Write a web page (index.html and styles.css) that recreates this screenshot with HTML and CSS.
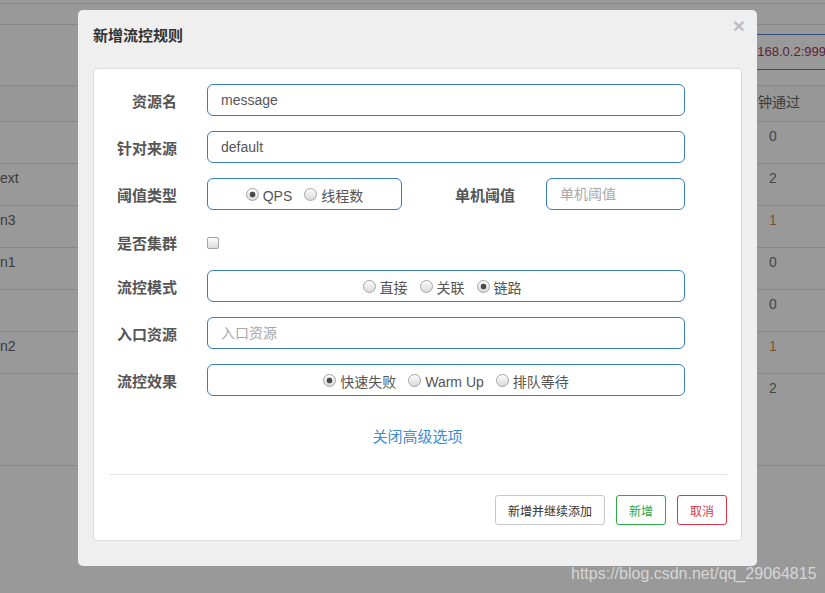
FILE: index.html
```html
<!DOCTYPE html>
<html lang="zh-CN">
<head>
<meta charset="utf-8">
<title>新增流控规则</title>
<link rel="stylesheet" href="styles.css">
</head>
<body>
<div class="page">
  <div class="bar bar-a"></div>
  <div class="bar bar-b"></div>
  <div class="search">
    <div class="host-box">192.168.0.2:9999</div>
  </div>
  <div class="trow thead"><span class="c1"></span><span class="c2">秒钟通过</span></div>
  <div class="trow"><span class="c1"></span><span class="c2 v">0</span></div>
  <div class="trow"><span class="c1">ext</span><span class="c2 v">2</span></div>
  <div class="trow"><span class="c1">n3</span><span class="c2 v warn">1</span></div>
  <div class="trow"><span class="c1">n1</span><span class="c2 v">0</span></div>
  <div class="trow"><span class="c1"></span><span class="c2 v">0</span></div>
  <div class="trow"><span class="c1">n2</span><span class="c2 v warn">1</span></div>
  <div class="trow tlast"><span class="c1"></span><span class="c2 v">2</span></div>
</div>

<div class="modal">
  <div class="modal-header">
    <h4 class="modal-title">新增流控规则</h4>
    <span class="close">×</span>
  </div>
  <div class="panel">
    <div class="form">
      <div class="row">
        <label class="lbl">资源名</label>
        <input class="ctl wide" type="text" value="message">
      </div>
      <div class="row">
        <label class="lbl">针对来源</label>
        <input class="ctl wide" type="text" value="default">
      </div>
      <div class="row">
        <label class="lbl">阈值类型</label>
        <div class="ctl radios short">
          <label class="opt"><input type="radio" name="grade" checked><span>QPS</span></label>
          <label class="opt"><input type="radio" name="grade"><span>线程数</span></label>
        </div>
        <label class="lbl lbl2">单机阈值</label>
        <input class="ctl narrow" type="text" placeholder="单机阈值">
      </div>
      <div class="row row-check">
        <label class="lbl">是否集群</label>
        <input class="chk" type="checkbox">
      </div>
      <div class="row">
        <label class="lbl">流控模式</label>
        <div class="ctl radios wide shift">
          <label class="opt"><input type="radio" name="mode"><span>直接</span></label>
          <label class="opt"><input type="radio" name="mode"><span>关联</span></label>
          <label class="opt"><input type="radio" name="mode" checked><span>链路</span></label>
        </div>
      </div>
      <div class="row">
        <label class="lbl">入口资源</label>
        <input class="ctl wide" type="text" placeholder="入口资源">
      </div>
      <div class="row">
        <label class="lbl">流控效果</label>
        <div class="ctl radios wide">
          <label class="opt"><input type="radio" name="effect" checked><span>快速失败</span></label>
          <label class="opt"><input type="radio" name="effect"><span>Warm Up</span></label>
          <label class="opt"><input type="radio" name="effect"><span>排队等待</span></label>
        </div>
      </div>
    </div>
    <div class="more"><a class="more-link">关闭高级选项</a></div>
    <div class="divider"></div>
    <div class="actions">
      <button class="btn">新增并继续添加</button>
      <button class="btn btn-ok">新增</button>
      <button class="btn btn-cancel">取消</button>
    </div>
  </div>
</div>

<div class="watermark">https://blog.csdn.net/qq_29064815</div>
</body>
</html>
```

FILE: styles.css
```css
* { box-sizing: border-box; }

body {
  margin: 0;
  width: 825px;
  height: 593px;
  overflow: hidden;
  position: relative;
  background: #999999;
  font-family: "Liberation Sans", "Noto Sans CJK SC", sans-serif;
  font-size: 14px;
  color: #3c3c3c;
}

/* background page (dimmed) */
.page { width: 825px; overflow: hidden; }
.bar { border-bottom: 1px solid #878787; }
.bar-a { height: 4px; }
.bar-b { height: 21px; }
.search {
  height: 61px;
  border-bottom: 1px solid #878787;
  padding-top: 9px;
}
.host-box {
  margin-left: 700px;
  width: 125px;
  height: 36px;
  border: 1px solid #2c4d78;
  border-right: none;
  padding-left: 31px;
  line-height: 34px;
  font-size: 13px;
  color: #5a2236;
  white-space: nowrap;
  overflow: hidden;
}
.trow {
  display: flex;
  justify-content: space-between;
  height: 42px;
  border-bottom: 1px solid #878787;
  padding-top: 4px;
  line-height: 20px;
}
.thead {
  height: 36px;
  padding-top: 6px;
  background: #979797;
}
.tlast { height: 92px; }
.c1 { width: 60px; }
.c2 {
  width: 82px;
  padding-left: 1px;
  white-space: nowrap;
}
.v { padding-left: 26px; color: #454545; }
.warn { color: #7a5430; }

/* modal */
.modal {
  position: absolute;
  left: 78px;
  top: 10px;
  width: 679px;
  background: #efefef;
  border-radius: 5px;
  padding: 15px 15px 25px;
}
.modal-header {
  display: flex;
  justify-content: space-between;
  align-items: flex-start;
  margin-bottom: 21px;
}
.modal-title {
  margin: 0;
  font-size: 15px;
  line-height: 22px;
  font-weight: 700;
  color: #333;
}
.close {
  font-size: 21px;
  font-weight: 700;
  line-height: 22px;
  color: #bfbfbf;
  margin-top: -10px;
  margin-right: -3px;
}

.panel {
  background: #fff;
  border: 1px solid #dcdcdc;
  border-radius: 4px;
  padding: 15px 0 15px;
}

.form { display: flex; flex-direction: column; }
.row {
  display: flex;
  align-items: center;
  height: 32px;
  margin-bottom: 15px;
}
.row:last-child { margin-bottom: 0; }
.row-check { height: 34px; margin-bottom: 11px; }

.lbl {
  width: 83px;
  margin-right: 30px;
  padding-top: 4px;
  text-align: right;
  font-size: 15px;
  font-weight: 700;
  color: #555;
  line-height: 20px;
  white-space: nowrap;
}
.lbl2 { width: 113px; margin-right: 31px; }

.ctl {
  height: 32px;
  border: 1px solid #3a7dbf;
  border-radius: 6px;
  background: #fff;
  font-family: "Liberation Sans", "Noto Sans CJK SC", sans-serif;
  font-size: 14px;
  color: #555;
  padding: 0 13px;
  outline: none;
}
.ctl::placeholder { color: #a8a8a8; }
.wide { width: 478px; }
.short { width: 195px; }
.narrow { width: 139px; }

.radios {
  display: flex;
  justify-content: center;
  align-items: center;
  gap: 12px;
  padding-top: 3px;
}
.shift { padding-right: 21px; }
.opt {
  display: flex;
  align-items: center;
  gap: 4px;
  line-height: 20px;
  color: #555;
}
.opt input {
  appearance: none;
  -webkit-appearance: none;
  margin: 0 0 2px;
  width: 13px;
  height: 13px;
  border: 1px solid #a4a4a4;
  border-radius: 50%;
  background: linear-gradient(#fdfdfd, #d9d9d9);
}
.opt input:checked {
  background: radial-gradient(circle, #4a4a4a 0 2.6px, transparent 3.2px), linear-gradient(#fdfdfd, #d9d9d9);
}

.chk {
  appearance: none;
  -webkit-appearance: none;
  margin: 2px 0 0;
  width: 12px;
  height: 12px;
  border: 1px solid #a4a4a4;
  border-radius: 2px;
  background: linear-gradient(#fdfdfd, #dadada);
}

.more {
  margin-top: 31px;
  text-align: center;
  line-height: 20px;
}
.more-link {
  font-size: 15px;
  color: #3d8bd2;
  cursor: pointer;
}

.divider {
  margin: 27px 14px 20px 15px;
  border-top: 1px solid #e3e3e3;
}

.actions {
  display: flex;
  justify-content: flex-end;
  gap: 11px;
  padding-right: 14px;
}
.btn {
  height: 30px;
  padding: 0 12px;
  border: 1px solid #c8c8c8;
  border-radius: 3px;
  background: #fff;
  font-family: "Liberation Sans", "Noto Sans CJK SC", sans-serif;
  font-size: 12px;
  color: #333;
}
.btn-ok { border-color: #2ea745; color: #2ea745; }
.btn-cancel { border-color: #df3448; color: #df3448; }

.watermark {
  position: absolute;
  left: 571px;
  top: 564px;
  font-size: 16px;
  line-height: 20px;
  color: #d6d6d6;
  white-space: nowrap;
}
```
